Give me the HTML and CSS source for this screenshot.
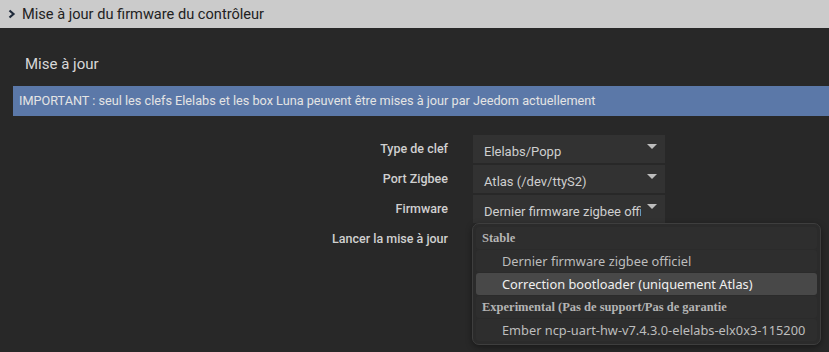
FILE: index.html
```html
<!DOCTYPE html>
<html lang="fr">
<head>
  <meta charset="UTF-8">
  <title>Mise à jour du firmware</title>
  <link rel="stylesheet" href="styles.css">
</head>
<body>
  <div class="panel-heading">
    <span class="chevron">
      <svg width="8" height="10" viewBox="0 0 8 10"><path d="M1.5 1.5 L5.5 5 L1.5 8.5" fill="none" stroke="#1f2a3a" stroke-width="2.2"/></svg>
    </span>
    Mise à jour du firmware du contrôleur
  </div>

  <div class="panel-body">
    <h3 class="legend">Mise à jour</h3>
    <div class="alert">IMPORTANT : seul les clefs Elelabs et les box Luna peuvent être mises à jour par Jeedom actuellement</div>

    <form class="form">
      <div class="form-row">
        <label>Type de clef</label>
        <div class="select">Elelabs/Popp<span class="caret"></span></div>
      </div>
      <div class="form-row">
        <label>Port Zigbee</label>
        <div class="select">Atlas (/dev/ttyS2)<span class="caret"></span></div>
      </div>
      <div class="form-row">
        <label>Firmware</label>
        <div class="select">Dernier firmware zigbee officiel<span class="caret"></span></div>
      </div>
      <div class="form-row">
        <label>Lancer la mise à jour</label>
        <div class="dropdown-anchor">
          <ul class="dropdown">
            <li class="group">Stable</li>
            <li class="option">Dernier firmware zigbee officiel</li>
            <li class="option active">Correction bootloader (uniquement Atlas)</li>
            <li class="group">Experimental (Pas de support/Pas de garantie</li>
            <li class="option">Ember ncp-uart-hw-v7.4.3.0-elelabs-elx0x3-115200</li>
          </ul>
        </div>
      </div>
    </form>
  </div>
</body>
</html>
```

FILE: styles.css
```css
html, body {
  margin: 0;
  padding: 0;
  height: 100%;
}
body {
  font-family: Roboto, "Liberation Sans", sans-serif;
  background-color: #282828;
  overflow: hidden;
}
.panel-heading {
  background-color: #cbcbcb;
  color: #222;
  height: 28px;
  line-height: 28px;
  font-size: 14.6px;
  padding-left: 8px;
  display: flex;
  align-items: center;
}
.chevron {
  display: inline-flex;
  width: 14px;
}
.panel-body {
  padding: 0 0 0 13px;
}
.legend {
  margin: 0;
  padding: 27px 0 0 12px;
  height: 31px;
  font-size: 15px;
  font-weight: normal;
  color: #d8d8d8;
}
.alert {
  background-color: #5b78a8;
  color: #e4e4e4;
  font-size: 12.7px;
  height: 30px;
  line-height: 30px;
  padding-left: 6px;
}
.form {
  padding-top: 19px;
}
.form-row {
  display: flex;
  align-items: flex-start;
  margin-bottom: 2px;
}
.form-row label {
  width: 435px;
  text-align: right;
  color: #d0d0d0;
  font-size: 12.5px;
  font-weight: 500;
  line-height: 28px;
}
.select {
  margin-left: 25px;
  width: 181px;
  height: 28px;
  line-height: 33px;
  padding-left: 11px;
  background-color: #323232;
  color: #cfcfcf;
  font-size: 13px;
  position: relative;
  white-space: nowrap;
  overflow: hidden;
}
.caret {
  position: absolute;
  right: 0;
  top: 0;
  width: 24px;
  height: 28px;
  background-color: #323232;
}
.caret::after {
  content: "";
  position: absolute;
  left: 6px;
  top: 9px;
  border-left: 5px solid transparent;
  border-right: 5px solid transparent;
  border-top: 5px solid #bdbdbd;
}
.dropdown-anchor {
  margin-left: 24px;
  position: relative;
  height: 26px;
}
.dropdown {
  position: absolute;
  left: 0;
  top: -2px;
  width: 341px;
  margin: 0;
  padding: 3px;
  list-style: none;
  background-color: #2b2b2b;
  border: 1px solid #3e3e3e;
  border-radius: 7px;
  box-shadow: 0 2px 6px rgba(0, 0, 0, 0.4);
}
.dropdown li {
  height: 22px;
  line-height: 22px;
  margin-bottom: 1px;
  border-radius: 3px;
  background-color: #2e2e2e;
  white-space: nowrap;
}
.dropdown li:last-child {
  margin-bottom: 0;
}
.group {
  font-family: "Liberation Serif", serif;
  font-weight: bold;
  font-size: 12.5px;
  color: #b4b4b4;
  padding-left: 6px;
}
.option {
  font-family: "Noto Sans", "Open Sans", sans-serif;
  font-size: 12.8px;
  color: #bdbdbd;
  padding-left: 26px;
}
.option.active {
  background-color: #484848;
  color: #f0f0f0;
}
```
